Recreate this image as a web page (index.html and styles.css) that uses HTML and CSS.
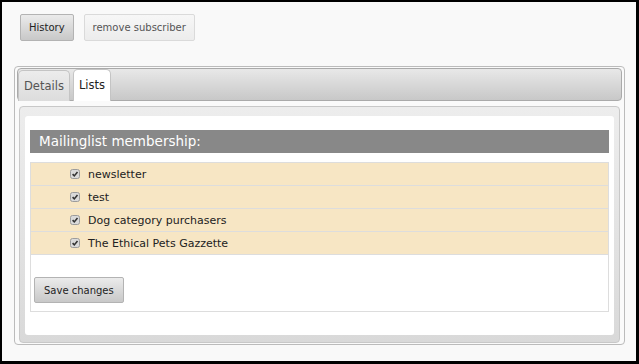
FILE: index.html
```html
<!DOCTYPE html>
<html lang="en">
<head>
    <meta charset="UTF-8">
    <title>Subscriber - Lists</title>
    <link rel="stylesheet" href="styles.css">
</head>
<body>
    <div class="toolbar">
        <button class="btn">History</button>
        <button class="btn btn-light">remove subscriber</button>
    </div>

    <div class="tabs">
        <ul class="tab-nav">
            <li class="tab">Details</li>
            <li class="tab active">Lists</li>
        </ul>

        <div class="tab-panel">
            <div class="panel-body">
                <div class="section-title">Mailinglist membership:</div>
                <div class="list-box">
                    <label class="list-row">
                        <svg class="check" width="10" height="10" viewBox="0 0 10 10"><rect x="0.5" y="0.5" width="9" height="9" rx="2"/><path d="M2.6 5.1 L4.3 6.9 L7.5 3.1"/></svg>
                        newsletter
                    </label>
                    <label class="list-row">
                        <svg class="check" width="10" height="10" viewBox="0 0 10 10"><rect x="0.5" y="0.5" width="9" height="9" rx="2"/><path d="M2.6 5.1 L4.3 6.9 L7.5 3.1"/></svg>
                        test
                    </label>
                    <label class="list-row">
                        <svg class="check" width="10" height="10" viewBox="0 0 10 10"><rect x="0.5" y="0.5" width="9" height="9" rx="2"/><path d="M2.6 5.1 L4.3 6.9 L7.5 3.1"/></svg>
                        Dog category purchasers
                    </label>
                    <label class="list-row">
                        <svg class="check" width="10" height="10" viewBox="0 0 10 10"><rect x="0.5" y="0.5" width="9" height="9" rx="2"/><path d="M2.6 5.1 L4.3 6.9 L7.5 3.1"/></svg>
                        The Ethical Pets Gazzette
                    </label>
                    <div class="form-actions">
                        <button class="btn btn-save">Save changes</button>
                    </div>
                </div>
            </div>
        </div>
    </div>
</body>
</html>
```

FILE: styles.css
```css
/* Page frame */
html {
    background-color: #000;
    height: 100%;
}

body {
    font-family: "DejaVu Sans", Verdana, sans-serif;
    margin: 2px 3px 3px 2px;
    height: 359px;
    box-sizing: border-box;
    padding: 12px 11px 16px 12px;
    background-color: #f9f9f9;
    color: #222;
    display: flex;
    flex-direction: column;
}

/* Buttons */
.toolbar {
    display: flex;
    gap: 10px;
    padding-left: 6px;
    margin-bottom: 25px;
}

.btn {
    font-family: inherit;
    font-size: 10px;
    height: 27px;
    padding: 0 8px;
    border: 1px solid #b3b3b3;
    border-radius: 2px;
    background: linear-gradient(#ebebeb, #c8c8c8);
    color: #222;
    cursor: pointer;
}

.btn-light {
    border-color: #dadada;
    background: linear-gradient(#f7f7f7, #ececec);
    color: #555;
}

.btn-save {
    height: 26px;
    padding: 0 9px;
}

/* Tabs */
.tabs {
    flex: 1;
    display: flex;
    flex-direction: column;
    border: 1px solid #bbb;
    border-radius: 4px;
    padding: 1px 2px 1px 2px;
    background-color: #fafafa;
}

.tab-nav {
    list-style: none;
    margin: 0;
    padding: 0;
    height: 31px;
    display: flex;
    align-items: flex-end;
    gap: 3px;
    border: 1px solid #aaa;
    border-radius: 4px;
    background: linear-gradient(#e8e8e8, #c8c8c8);
}

.tab {
    height: 30px;
    line-height: 30px;
    padding: 0 5px;
    margin-bottom: -1px;
    font-size: 11.5px;
    color: #555;
    border: 1px solid #c4c4c4;
    border-bottom: none;
    border-radius: 5px 5px 0 0;
    background: linear-gradient(#ececec, #dcdcdc);
}

.tab.active {
    background: #fff;
    color: #222;
    height: 31px;
    border-color: #c4c4c4;
}

.tab-panel {
    flex: 1;
    display: flex;
    margin: 5px 2px 0 2px;
    padding: 9px 5px 7px 5px;
    border: 1px solid #c8c8c8;
    border-radius: 4px;
    background: linear-gradient(#ededed, #d9d9d9);
}

.panel-body {
    flex: 1;
    background-color: #fff;
    border-radius: 3px;
    padding: 14px 5px 0 5px;
}

/* Mailing list section */
.section-title {
    height: 23px;
    line-height: 23px;
    padding-left: 9px;
    margin-bottom: 9px;
    background-color: #888;
    color: #fff;
    font-size: 13.5px;
}

.list-box {
    border: 1px solid #ddd;
}

.list-row {
    display: flex;
    align-items: center;
    height: 22px;
    padding-left: 39px;
    border-bottom: 1px solid #ddd;
    background-color: #f7e6c4;
    font-size: 11px;
    color: #222;
}

.check {
    margin-right: 8px;
    flex-shrink: 0;
}

.check rect {
    fill: #dadada;
    stroke: #9c9c9c;
}

.check path {
    fill: none;
    stroke: #333;
    stroke-width: 1.6;
}

.form-actions {
    padding: 22px 0 8px 3px;
}
```
